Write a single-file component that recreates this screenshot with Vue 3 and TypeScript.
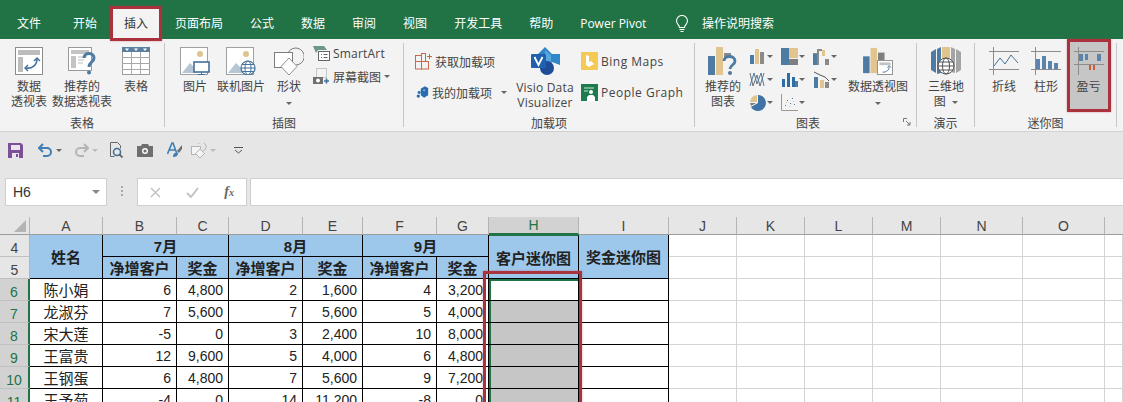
<template>
  <div class="app">
    <!-- tab strip -->
    <div class="tabs">
      <div v-for="tab in tabs" :key="tab" class="tab" :class="{ active: tab === '插入' }">{{ tab }}</div>
      <svg class="bulb" width="14" height="18" viewBox="0 0 14 18" fill="none" stroke="#fff" stroke-width="1.1">
        <path d="M4.5 12.5C4.5 10 1.5 9 1.5 6a5.5 5.5 0 0 1 11 0c0 3-3 4-3 6.5z" />
        <path d="M4.5 14.5h5M5.5 16.5h3" />
      </svg>
      <div class="search">操作说明搜索</div>
    </div>

    <!-- ribbon -->
    <div class="ribbon">
      <section class="group g-table">
        <div class="tools">
          <div class="big w44">
            <svg width="28" height="28" viewBox="0 0 28 28">
              <rect x=".5" y=".5" width="27" height="27" fill="#fff" stroke="#8c8c8c" />
              <rect x="3" y="3" width="22" height="5" fill="#bdbdbd" />
              <rect x="3" y="10" width="5" height="15" fill="#bdbdbd" />
              <path d="M11 21c6 1 11-3 11-9" fill="none" stroke="#41719c" stroke-width="1.6" />
              <path d="M19 14l3-3 3 3M13 18l-3 3 3 3" fill="none" stroke="#41719c" stroke-width="1.4" />
            </svg>
            <div class="label">数据<br />透视表</div>
          </div>
          <div class="big w62">
            <svg width="28" height="28" viewBox="0 0 28 28">
              <rect x=".5" y=".5" width="23" height="23" fill="#fff" stroke="#9a9a9a" />
              <rect x="3" y="3" width="18" height="4" fill="#c4c4c4" />
              <rect x="3" y="9" width="5" height="12" fill="#c4c4c4" />
              <path d="M10 10h9M10 13h6M10 16h5" stroke="#bbb" />
              <path d="M16 11c0-6 10-6 10 0 0 4-5 4-5 9" fill="none" stroke="#4d7ba3" stroke-width="3" />
              <circle cx="21" cy="25.5" r="2" fill="#4d7ba3" />
            </svg>
            <div class="label">推荐的<br />数据透视表</div>
          </div>
          <div class="big w46">
            <svg width="28" height="28" viewBox="0 0 28 28">
              <rect x=".5" y=".5" width="27" height="27" fill="#fff" stroke="#9a9a9a" />
              <rect width="28" height="5" fill="#5b7f9e" />
              <path d="M3 1.5h4L5 4zM12 1.5h4L14 4zM21 1.5h4L23 4z" fill="#fff" />
              <path d="M0 10.5h28M0 16.5h28M0 22.5h28M9.5 5v23M18.5 5v23" stroke="#a8a8a8" />
            </svg>
            <div class="label">表格</div>
          </div>
        </div>
        <div class="caption">表格</div>
      </section>

      <section class="group g-illus">
        <div class="tools">
          <div class="big w38">
            <svg width="30" height="28" viewBox="0 0 30 28">
              <rect x=".5" y=".5" width="27" height="27" fill="#fff" stroke="#a0a0a0" />
              <circle cx="20" cy="7" r="3" fill="#e0c48f" />
              <path d="M2 26l8-10 7 7v3z" fill="#b6c6d4" />
              <rect x="14" y="15" width="15" height="10" fill="#fff" stroke="#41719c" stroke-width="1.6" />
              <path d="M21.500 25v2M18 27.500h7" stroke="#41719c" />
            </svg>
            <div class="label">图片</div>
          </div>
          <div class="big w54">
            <svg width="30" height="28" viewBox="0 0 30 28">
              <rect x=".5" y=".5" width="27" height="27" fill="#fff" stroke="#a0a0a0" />
              <circle cx="20" cy="7" r="3" fill="#e0c48f" />
              <path d="M2 26l8-10 7 7v3z" fill="#b6c6d4" />
              <circle cx="22" cy="21" r="7" fill="#fff" stroke="#41719c" stroke-width="1.200" />
              <ellipse cx="22" cy="21" rx="3" ry="7" fill="none" stroke="#41719c" />
              <path d="M15 21h14M16 17.500h12M16 24.500h12" stroke="#41719c" />
            </svg>
            <div class="label">联机图片</div>
          </div>
          <div class="big w42">
            <svg width="30" height="28" viewBox="0 0 30 28" fill="#fff" stroke="#7c7c7c">
              <path d="M14 6a8.500 8.500 0 1 1 8 12" fill="none" />
              <rect x=".5" y="5.500" width="18" height="15" />
              <path d="M15 11l8 8.500-8 8.500-8-8.500z" stroke="#8f8f8f" />
            </svg>
            <div class="label">形状</div>
            <i class="caret under" />
          </div>
          <div class="stack art-stack">
            <div class="row">
              <svg width="17" height="17" viewBox="0 0 17 17">
                <path d="M0 1h11l3 4H5l-2 3z" fill="#6a9a86" />
                <rect x="5.500" y="6.500" width="11" height="9" fill="#fff" stroke="#666" />
                <path d="M8 9.500h1M8 12.500h1M10.500 9.500h4M10.500 12.500h4" stroke="#666" />
              </svg>
              <span class="latin">SmartArt</span>
            </div>
            <div class="row">
              <svg width="17" height="17" viewBox="0 0 17 17">
                <rect x="3.500" y=".5" width="10" height="9" fill="none" stroke="#999" stroke-dasharray="1 1" />
                <rect x="0" y="9" width="10" height="7" fill="#6f6f6f" />
                <circle cx="5" cy="12.500" r="2" fill="#fff" />
                <path d="M11 13h5M13.500 10.500v5" stroke="#41719c" stroke-width="1.600" />
              </svg>
              <span>屏幕截图</span>
              <i class="caret" />
            </div>
          </div>
        </div>
        <div class="caption">插图</div>
      </section>

      <section class="group g-addin">
        <div class="tools">
          <div class="stack addin-stack">
            <div class="row">
              <svg width="17" height="18" viewBox="0 0 17 18" fill="none" stroke="#c8694a">
                <rect x=".5" y="3.500" width="6" height="6" />
                <rect x=".5" y="9.500" width="6" height="7.500" />
                <rect x="6.500" y="9.500" width="7" height="7.500" />
                <rect x="6.500" y="1.500" width="4" height="8" />
                <path d="M12 4.500h5M14.500 2v5" />
              </svg>
              <span>获取加载项</span>
            </div>
            <div class="row">
              <svg width="17" height="16" viewBox="0 0 17 16">
                <path d="M7 4l5-3 4 2v9l-5 3-4-3z" fill="#2a6cb0" />
                <circle cx="5" cy="8.500" r="1.800" fill="#2a6cb0" />
                <circle cx="4" cy="13" r="2" fill="#2a6cb0" />
                <circle cx="11" cy="6" r="1" fill="#bcd4ea" />
              </svg>
              <span>我的加载项</span>
              <i class="caret addin-caret" />
            </div>
          </div>
          <div class="big w76">
            <svg width="29" height="28" viewBox="0 0 29 28">
              <path d="M14 0l7 7h8v11l-8-3-7 6-7-6V7z" fill="#2f86c9" />
              <path d="M14 3l6 5v7l-6 5z" fill="#55a6dd" />
              <circle cx="16" cy="21" r="7" fill="#1e4c96" />
              <rect x="0" y="7" width="15" height="14" rx="1" fill="#2160ac" />
              <path d="M3.500 10l4 8 4-8" fill="none" stroke="#fff" stroke-width="1.800" />
            </svg>
            <div class="label latin">Visio Data<br />Visualizer</div>
          </div>
          <div class="stack store-stack">
            <div class="row">
              <svg width="17" height="18" viewBox="0 0 17 18">
                <rect width="17" height="18" rx="1" fill="#f4c956" />
                <path d="M5 3v10l3 2 5-3-3-3-2 1V4z" fill="#fff" />
              </svg>
              <span class="latin wide">Bing Maps</span>
            </div>
            <div class="row">
              <svg width="17" height="17" viewBox="0 0 17 17">
                <rect width="17" height="17" fill="#1d7b4d" />
                <path d="M3 4h10M3 7h4" stroke="#cfe6d8" />
                <circle cx="10" cy="8" r="2" fill="#fff" />
                <path d="M6 17v-4l2-2h4l2 2v4z" fill="#fff" />
              </svg>
              <span class="latin wide">People Graph</span>
            </div>
          </div>
        </div>
        <div class="caption">加载项</div>
      </section>

      <section class="group g-chart">
        <div class="tools">
          <div class="big w46">
            <svg width="30" height="28" viewBox="0 0 30 28">
              <rect x="0" y="9" width="7" height="19" fill="#4d7ba3" />
              <rect x="8" y="0" width="7" height="28" fill="#e2c48f" />
              <rect x="16" y="6" width="7" height="5" fill="#8a8a8a" />
              <path d="M16 14c0-6 11-6 11 0 0 4-5 4-5 8" fill="none" stroke="#4d7ba3" stroke-width="2.800" />
              <circle cx="22" cy="26" r="2" fill="#4d7ba3" />
            </svg>
            <div class="label">推荐的<br />图表</div>
          </div>
          <div class="chart-grid">
            <div v-for="(icon, n) in miniIcons" :key="n" class="mini">
              <svg width="17" height="17" viewBox="0 0 17 17" v-html="icon" />
              <i class="caret" />
            </div>
          </div>
          <div class="big w66">
            <svg width="32" height="30" viewBox="0 0 32 30">
              <rect x="0" y="10" width="7" height="18" fill="#4d7ba3" />
              <rect x="8" y="1" width="7" height="27" fill="#e2c48f" />
              <rect x="16" y="6" width="7" height="8" fill="#7f7f7f" />
              <rect x="15.500" y="14.500" width="16" height="15" fill="#fff" stroke="#8c8c8c" />
              <rect x="17.500" y="16.500" width="12" height="3" fill="#c4c4c4" />
              <path d="M21 27c4 0 7-2 7-6M26 22l2-2 2 2" fill="none" stroke="#41719c" />
            </svg>
            <div class="label">数据透视图</div>
            <i class="caret under" />
          </div>
        </div>
        <div class="caption">图表</div>
        <svg class="launcher" width="8" height="8" viewBox="0 0 8 8" fill="none" stroke="#777">
          <path d="M.5 4V.5H4M3 3l4 4M7 4v3H4" />
        </svg>
      </section>

      <section class="group g-tour">
        <div class="tools">
          <div class="big w56">
            <svg width="30" height="28" viewBox="0 0 30 28">
              <path d="M0 5l5-3v24l-5-3z" fill="#4d7ba3" />
              <path d="M6 2l4-2v26l-4 1z" fill="#4d7ba3" />
              <rect x="11" y="0" width="8" height="26" fill="#e2c48f" />
              <path d="M20 0l4 2v24l-4-1zM25 2l5 3v18l-5 3z" fill="#a4a4a4" />
              <circle cx="15" cy="19" r="8" fill="#fff" stroke="#555" />
              <ellipse cx="15" cy="19" rx="3.500" ry="8" fill="none" stroke="#555" />
              <path d="M7 19h16M8 15h14M8 23h14" stroke="#555" />
            </svg>
            <div class="label">三维地<br />图 <i class="caret inline" /></div>
          </div>
        </div>
        <div class="caption">演示</div>
      </section>

      <section class="group g-spark">
        <div class="tools">
          <div class="big w42">
            <svg width="30" height="28" viewBox="0 0 30 28" fill="none">
              <path d="M0 4.500h30M0 22.500h30M4.500 0v28" stroke="#8c8c8c" />
              <path d="M5 19l6-8 5 6 6-9 7 8" stroke="#41719c" />
            </svg>
            <div class="label">折线</div>
          </div>
          <div class="big w42">
            <svg width="30" height="28" viewBox="0 0 30 28">
              <path d="M0 4.500h30M0 22.500h30M4.500 0v28" stroke="#8c8c8c" fill="none" />
              <path d="M5 12h4v10H5zM11 9h4v13h-4zM17 14h4v8h-4zM23 16h4v6h-4z" fill="#5b84ab" />
            </svg>
            <div class="label">柱形</div>
          </div>
          <div class="big w43 picked">
            <svg width="30" height="28" viewBox="0 0 30 28">
              <path d="M0 4.500h30M0 17.500h30M4.500 0v28" stroke="#8c8c8c" fill="none" />
              <path d="M5 7h4v7H5zM11 7h3v6h-3zM23 7h4v7h-4z" fill="#5b84ab" />
              <path d="M15 18h2v5h-2zM19 18h2v5h-2z" fill="#c9603a" />
            </svg>
            <div class="label">盈亏</div>
          </div>
        </div>
        <div class="caption">迷你图</div>
      </section>

      <div class="mark mark-spark" />
    </div>

    <!-- quick access toolbar -->
    <div class="qat">
      <svg class="q-save" width="15" height="15" viewBox="0 0 15 15">
        <path d="M0 0h13l2 2v13H0z" fill="#7d4f96" />
        <rect x="3" y="2" width="9" height="5" fill="#e9e4ee" />
        <rect x="4" y="10" width="7" height="5" fill="#e9e4ee" />
        <rect x="8" y="11" width="2" height="3" fill="#7d4f96" />
      </svg>
      <svg class="q-undo" width="15" height="14" viewBox="0 0 15 14" fill="none" stroke="#3f7fb5" stroke-width="2">
        <path d="M1 5h8a4 4 0 0 1 0 8H5M5 1L1 5l4 4" />
      </svg>
      <i class="caret q-caret" />
      <svg class="q-redo" width="15" height="14" viewBox="0 0 15 14" fill="none" stroke="#b5b5b5" stroke-width="2">
        <path d="M14 5H6a4 4 0 0 0 0 8h4M10 1l4 4-4 4" />
      </svg>
      <i class="caret q-caret light" />
      <svg class="q-print" width="14" height="16" viewBox="0 0 14 16" fill="none" stroke="#666">
        <path d="M.5.5h7l3 3v3M.5.5v14h4" />
        <circle cx="7" cy="10" r="3.500" stroke="#3e6d96" stroke-width="1.500" />
        <path d="M9.500 12.500l3 3" stroke-width="1.800" />
      </svg>
      <svg class="q-camera" width="16" height="13" viewBox="0 0 16 13">
        <path d="M0 2h4l1-2h6l1 2h4v11H0z" fill="#6f6f6f" />
        <circle cx="8" cy="7" r="3" fill="#fff" />
        <circle cx="8" cy="7" r="1.600" fill="#6f6f6f" />
      </svg>
      <svg class="q-style" width="16" height="16" viewBox="0 0 16 16" fill="none">
        <path d="M.5 12L5 1h1l4 11M2.500 8h6" stroke="#3f7fb5" stroke-width="1.600" />
        <path d="M15 3l-5 6 2 2 3-4z" fill="#6f6f6f" />
        <path d="M6 15c0-4 2-5 5-4 0 3-2 4-5 4z" fill="#3f7fb5" />
      </svg>
      <svg class="q-shape" width="16" height="15" viewBox="0 0 16 15" fill="#f4f4f4" stroke="#b5b5b5">
        <path d="M7 1a4.500 4.500 0 1 1 5 7" fill="none" />
        <rect x=".5" y="3.500" width="9" height="8" />
        <path d="M9 6l4.500 4.500L9 15l-4.500-4.500z" />
      </svg>
      <i class="caret q-caret light" />
      <svg class="q-more" width="9" height="7" viewBox="0 0 9 7" fill="none" stroke="#555">
        <path d="M0 .5h9" />
        <path d="M1 3l3.500 3L8 3" />
      </svg>
    </div>

    <!-- formula bar -->
    <div class="formula">
      <div class="namebox">
        <span>H6</span>
        <i class="caret name-caret" />
      </div>
      <div class="grip" />
      <div class="fx-box">
        <svg width="11" height="11" viewBox="0 0 11 11" fill="none" stroke="#c4c4c4" stroke-width="1.500">
          <path d="M1 1l9 9M10 1l-9 9" />
        </svg>
        <svg width="13" height="11" viewBox="0 0 13 11" fill="none" stroke="#c4c4c4" stroke-width="2">
          <path d="M1 6l4 4 7-9" />
        </svg>
        <span class="fx">f<small>x</small></span>
      </div>
      <div class="input" />
    </div>

    <!-- sheet -->
    <div class="sheet">
      <div class="grid">
        <div class="corner">
          <svg width="12" height="12" viewBox="0 0 12 12"><path d="M12 0v12H0z" fill="#b4b4b4" /></svg>
        </div>
        <div v-for="c in letters" :key="c" class="col-head" :class="{ on: c === 'H' }">{{ c }}</div>
        <div class="col-head end" />

        <div class="row-head">4</div>
        <div class="th span-row">姓名</div>
        <div class="th span-col">7月</div>
        <div class="th span-col">8月</div>
        <div class="th span-col">9月</div>
        <div class="th span-row green-top">客户迷你图</div>
        <div class="th span-row">奖金迷你图</div>
        <div v-for="n in 7" :key="'a' + n" class="blank" />

        <div class="row-head">5</div>
        <template v-for="n in 3" :key="'m' + n">
          <div class="th">净增客户</div>
          <div class="th">奖金</div>
        </template>
        <div v-for="n in 7" :key="'b' + n" class="blank" />

        <template v-for="(r, i) in rows" :key="r.name">
          <div class="row-head on">{{ i + 6 }}</div>
          <div class="td name">{{ r.name }}</div>
          <div v-for="(v, j) in r.values" :key="j" class="td num">{{ fmt(v) }}</div>
          <div class="td sel" :class="{ first: i === 0 }" />
          <div class="td" />
          <div v-for="n in 7" :key="'c' + n" class="blank" />
        </template>
      </div>
      <div class="mark mark-col" />
    </div>

    <div class="mark mark-tab" />
  </div>
</template>

<script setup lang="ts">
const tabs = ['文件', '开始', '插入', '页面布局', '公式', '数据', '审阅', '视图', '开发工具', '帮助', 'Power Pivot']
const letters = 'ABCDEFGHIJKLMNO'.split('')

const rows = [
  { name: '陈小娟', values: [6, 4800, 2, 1600, 4, 3200] },
  { name: '龙淑芬', values: [7, 5600, 7, 5600, 5, 4000] },
  { name: '宋大莲', values: [-5, 0, 3, 2400, 10, 8000] },
  { name: '王富贵', values: [12, 9600, 5, 4000, 6, 4800] },
  { name: '王钢蛋', values: [6, 4800, 7, 5600, 9, 7200] },
  { name: '王予菊', values: [-4, 0, 14, 11200, -8, 0] }
]

// the small chart buttons, row by row (the last slot of the 3x3 block is empty)
const miniIcons = [
  '<rect x="1" y="7" width="4" height="9" fill="#4d7ba3"/><rect x="6" y="1" width="4" height="15" fill="#e2c48f"/><rect x="11" y="4" width="4" height="12" fill="#8a8a8a"/>',
  '<rect x="0" y="0" width="8" height="17" fill="#4d7ba3"/><rect x="8" y="0" width="9" height="10" fill="#e2c48f"/><rect x="8" y="11" width="9" height="6" fill="#7f7f7f"/>',
  '<path d="M0 17V5h4V1h5v6h3v4h4v6h-4V8H9V3H6v14z" fill="#8a8a8a"/><path d="M0 17V6h4v11z" fill="#4d7ba3"/><path d="M9 2h3v6H9z" fill="#e2c48f"/>',
  '<path d="M1 2l3 13 4-11 3 11 4-13" fill="none" stroke="#6f6f6f"/><path d="M1 15l4-13 3 11 4-11 3 13" fill="none" stroke="#4d7ba3"/>',
  '<path d="M1 8h3v8H1zM6 2h3v14H6zM11 6h3v10h-3z" fill="#2f6ea5"/><path d="M14 10h3v6h-3z" fill="#4d7ba3"/>',
  '<path d="M1 6h4v11H1z" fill="#4d7ba3"/><path d="M7 9h4v8H7z" fill="#e2c48f"/><path d="M12 11h4v6h-4z" fill="#8a8a8a"/><path d="M1 1l6 3 5 2 4 4" fill="none" stroke="#555"/>',
  '<path d="M9 1a8 8 0 1 1-7 12l7-4z" fill="#3f72a5"/><path d="M8 1a8 8 0 0 0-7 7h7z" fill="#e2c48f"/><path d="M1 9h6l-5 3z" fill="#7f7f7f"/>',
  '<path d="M.5 0v16.500H17" fill="none" stroke="#999"/><path d="M4 11h1v1H4zM6 6h1v1H6zM9 9h1v1H9zM11 4h1v1h-1zM13 10h1v1h-1z" fill="#4d7ba3"/><path d="M5 8h1v1H5zM8 12h1v1H8zM12 7h1v1h-1z" fill="#e2c48f"/>'
]

function fmt(v: number) {
  return v.toLocaleString('en-US')
}
</script>

<style>
html, body {
  margin: 0;
  background: #fff;
}
</style>

<style scoped>
.app {
  position: relative;
  width: 1123px;
  height: 402px;
  overflow: hidden;
  font-family: "Liberation Sans", "Noto Sans CJK SC", sans-serif;
  background: #e6e6e6;
  color: #444;
  font-size: 12px;
}

.tabs {
  display: flex;
  align-items: flex-end;
  height: 39px;
  background: #217346;
  color: #fff;
  font-family: "Open Sans", "Noto Sans CJK SC", sans-serif;
}
.tab {
  padding: 0 13.5px;
  height: 31px;
  line-height: 32px;
}
.tab:first-child {
  padding-left: 17px;
  padding-right: 18.5px;
}
.tab.active {
  background: #f3f3f3;
  color: #333;
}
.bulb {
  margin: 0 0 6px 15px;
}
.search {
  margin-left: 13px;
  height: 31px;
  line-height: 32px;
}

.ribbon {
  position: relative;
  display: flex;
  height: 92px;
  background: #f3f3f3;
  border-bottom: 1px solid #d2d2d2;
}
.group {
  position: relative;
  display: flex;
  flex-direction: column;
  height: 84px;
  margin-top: 4px;
  border-right: 1px solid #c6c6c6;
  box-sizing: border-box;
}
.g-table { width: 165px; padding-left: 7px; }
.g-illus { width: 239px; padding-left: 11px; }
.g-addin { width: 291px; padding-left: 11px; }
.g-chart { width: 222px; padding-left: 5px; }
.g-tour { width: 58px; }
.g-spark { width: 142px; padding-left: 8px; }
.tools {
  display: flex;
  flex: 1;
  min-height: 0;
}
.caption {
  height: 16px;
  line-height: 16px;
  margin-bottom: -5px;
  text-align: center;
}
.g-table .caption { margin-left: -7px; }
.g-illus .caption { margin-left: -11px; }
.g-addin .caption { margin-left: -11px; }
.g-spark .caption { margin-left: -8px; }
.big {
  display: flex;
  flex-direction: column;
  align-items: center;
  flex: none;
  padding-top: 4px;
  box-sizing: border-box;
}
.big svg {
  display: block;
  height: 28px;
  flex: none;
}
.label {
  margin-top: 5px;
  line-height: 15px;
  text-align: center;
  white-space: nowrap;
}
.latin {
  font-family: "Open Sans", sans-serif;
  letter-spacing: .2px;
}
.wide {
  letter-spacing: .5px;
}
.w38 { width: 38px; }
.w42 { width: 42px; }
.w43 { width: 43px; }
.w44 { width: 44px; }
.w46 { width: 46px; }
.w54 { width: 54px; }
.w56 { width: 58px; }
.w62 { width: 62px; }
.w66 { width: 66px; }
.w76 { width: 76px; }

.stack {
  display: flex;
  flex-direction: column;
}
.row {
  display: flex;
  align-items: center;
  gap: 3px;
  white-space: nowrap;
}
.art-stack {
  margin-left: 3px;
  padding-top: 2px;
  gap: 6px;
}
.art-stack .row {
  height: 17px;
}
.addin-stack {
  padding-top: 9px;
  gap: 13px;
  width: 92px;
}
.addin-stack .row {
  height: 18px;
}
.store-stack {
  padding-top: 9px;
  gap: 13px;
  margin-left: -2px;
}
.store-stack .row {
  height: 18px;
}

.caret {
  display: inline-block;
  width: 0;
  height: 0;
  border: 3px solid transparent;
  border-top: 3px solid #666;
  border-bottom-width: 0;
  flex: none;
}
.caret.under {
  margin-top: 7px;
}
.caret.inline {
  vertical-align: 2px;
  margin-left: 3px;
}
.addin-caret {
  margin-left: 6px;
}

.chart-grid {
  display: grid;
  grid-template-columns: repeat(3, 32px);
  grid-auto-rows: 23px;
  padding-top: 2px;
  margin: 0 0 0 3px;
}
.mini {
  display: flex;
  align-items: center;
  gap: 1px;
}
.mini svg {
  flex: none;
}
.launcher {
  position: absolute;
  right: 5px;
  bottom: 1px;
}

.picked {
  background: #c6c6c6;
  height: 73px;
  margin-top: -4px;
  padding-top: 8px;
}

.mark {
  position: absolute;
  box-sizing: border-box;
  border: 3px solid #a9323c;
  box-shadow: 0 0 2px rgba(190, 60, 70, .45);
  pointer-events: none;
}
.mark-tab {
  left: 110px;
  top: 6px;
  width: 52px;
  height: 35px;
}
.mark-spark {
  left: 1067px;
  top: 0;
  width: 44px;
  height: 73px;
}
.mark-col {
  left: 483px;
  top: 54px;
  width: 99px;
  height: 160px;
}

.qat {
  display: flex;
  align-items: center;
  height: 36px;
  padding-left: 8px;
}
.qat > * {
  flex: none;
}
.q-undo { margin-left: 15px; }
.q-caret { margin-left: 3px; }
.q-caret.light { border-top-color: #bbb; }
.q-redo { margin-left: 12px; }
.q-print { margin-left: 12px; }
.q-camera { margin-left: 13px; }
.q-style { margin-left: 14px; }
.q-shape { margin-left: 8px; }
.q-more { margin-left: 18px; }

.formula {
  display: flex;
  align-items: stretch;
  height: 28px;
  padding-left: 5px;
  margin-top: 10px;
}
.namebox,
.fx-box,
.input {
  background: #fff;
  border: 1px solid #cfcfcf;
  box-sizing: border-box;
}
.namebox {
  display: flex;
  align-items: center;
  justify-content: space-between;
  width: 102px;
  padding: 0 6px 0 7px;
  font-size: 14px;
  color: #333;
}
.name-caret {
  border-width: 4px;
  border-bottom-width: 0;
  border-top-color: #888;
}
.grip {
  width: 2px;
  height: 11px;
  margin: 8px 14px 0 14px;
  background: repeating-linear-gradient(#aaa 0 2px, transparent 2px 4px);
}
.fx-box {
  display: flex;
  align-items: center;
  justify-content: space-between;
  width: 110px;
  padding: 0 12px;
}
.fx {
  font-family: "Liberation Serif", serif;
  font-style: italic;
  font-weight: bold;
  font-size: 14px;
  color: #666;
}
.fx small {
  font-size: 10px;
}
.input {
  flex: 1;
  margin-left: 3px;
  margin-right: -1px;
}

.sheet {
  position: relative;
  margin-top: 11px;
}
.grid {
  display: grid;
  grid-template-columns: 30px 73px 74px 52px 74px 60px 74px 52px 90px 90px 68px 68px 68px 68px 82px 82px 18px;
  grid-template-rows: 18px;
  grid-auto-rows: 22px;
  background: #fff;
  color: #222;
}
.corner {
  display: flex;
  justify-content: flex-end;
  padding: 3px 3px 0 0;
  box-sizing: border-box;
  border-right: 1px solid #b4b4b4;
  border-bottom: 1px solid #9c9c9c;
  background: #e6e6e6;
}
.col-head {
  display: flex;
  align-items: center;
  justify-content: center;
  background: #e6e6e6;
  border-right: 1px solid #b4b4b4;
  border-bottom: 1px solid #9c9c9c;
  box-sizing: border-box;
  font-size: 14px;
  color: #444;
}
.col-head.on {
  background: #d2d2d2;
  border-bottom: 2px solid #217346;
  color: #217346;
}
.col-head.end {
  border-right: none;
}
.row-head {
  display: flex;
  align-items: center;
  justify-content: center;
  background: #e6e6e6;
  border-right: 1px solid #b4b4b4;
  border-bottom: 1px solid #c0c0c0;
  box-sizing: border-box;
  font-size: 14px;
  padding-top: 5px;
  color: #444;
}
.row-head.on {
  background: #d2d2d2;
  border-right: 2px solid #217346;
  color: #217346;
}
.th,
.td {
  display: flex;
  align-items: center;
  justify-content: center;
  box-sizing: border-box;
  border-right: 1px solid #000;
  border-bottom: 1px solid #000;
  font-size: 15px;
}
.th {
  background: #9dc8eb;
  font-weight: bold;
}
.span-row { grid-row: span 2; }
.span-col { grid-column: span 2; }
.green-top {
  border-top: 1px solid #217346;
}
.td.num {
  justify-content: flex-end;
  padding-right: 5px;
  font-size: 14px;
}
.td.sel {
  background: #c6c6c6;
  box-shadow: inset 2px 0 0 #217346;
}
.td.sel.first {
  background: #fff;
  box-shadow: inset 2px 2px 0 #217346;
}
.blank {
  box-sizing: border-box;
  border-right: 1px solid #d4d4d4;
  border-bottom: 1px solid #d4d4d4;
}
</style>
